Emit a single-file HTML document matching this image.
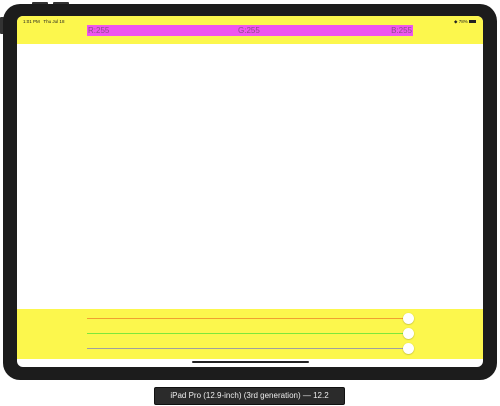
<!DOCTYPE html>
<html><head><style>
html,body{margin:0;padding:0;background:#fff;width:500px;height:406px;overflow:hidden;font-family:"Liberation Sans",sans-serif;position:relative}
.a{position:absolute}
</style></head><body>
<div class="a" style="left:32px;top:2px;width:16px;height:4px;background:#333;border-radius:1px"></div>
<div class="a" style="left:53px;top:2px;width:16px;height:4px;background:#333;border-radius:1px"></div>
<div class="a" style="left:0;top:17px;width:4px;height:17px;background:#333;border-radius:1px"></div>
<div class="a" style="left:3px;top:4px;width:494px;height:376px;background:#1c1c1c;border-radius:17px"></div>
<div class="a" style="left:17px;top:16px;width:466px;height:351px;background:#fff;border-radius:6px;overflow:hidden">
  <div class="a" style="left:0;top:0;width:466px;height:28px;background:#fcf74d"></div>
  <div class="a" style="left:6px;top:3px;font-size:4.5px;color:#222">1:01 PM&nbsp;&nbsp; Thu Jul 18</div>
  <div class="a" style="right:7px;top:3px;font-size:4.5px;color:#222">◆ 78% <span style="display:inline-block;width:7px;height:3px;background:#222;vertical-align:middle"></span></div>
  <div class="a" style="left:70px;top:9px;width:326px;height:11px;background:#ee55ee;font-size:8px;line-height:11px;color:#8a4a8a">
    <span class="a" style="left:1px">R:255</span>
    <span class="a" style="left:151px">G:255</span>
    <span class="a" style="right:1px">B:255</span>
  </div>
  <div class="a" style="left:0;top:293px;width:466px;height:50px;background:#fcf74d"></div>
  <div class="a" style="left:70px;top:302px;width:321px;height:1px;background:#f0a030"></div>
  <div class="a" style="left:70px;top:317px;width:321px;height:1px;background:#7ee83a"></div>
  <div class="a" style="left:70px;top:332px;width:321px;height:1px;background:#a0a0a0"></div>
  <div class="a" style="left:386px;top:297px;width:11px;height:11px;border-radius:50%;background:#fff;box-shadow:0 0.5px 1.5px rgba(0,0,0,.3)"></div>
  <div class="a" style="left:386px;top:312px;width:11px;height:11px;border-radius:50%;background:#fff;box-shadow:0 0.5px 1.5px rgba(0,0,0,.3)"></div>
  <div class="a" style="left:386px;top:327px;width:11px;height:11px;border-radius:50%;background:#fff;box-shadow:0 0.5px 1.5px rgba(0,0,0,.3)"></div>
  <div class="a" style="left:175px;top:345px;width:117px;height:2px;background:#222;border-radius:1px"></div>
</div>
<div class="a" style="left:154px;top:387px;width:191px;height:18px;background:#2b2b2b;border-radius:2px;border:1px solid #111;box-sizing:border-box;color:#eee;font-size:8px;line-height:16px;text-align:center">iPad Pro (12.9-inch) (3rd generation) — 12.2</div>
</body></html>
